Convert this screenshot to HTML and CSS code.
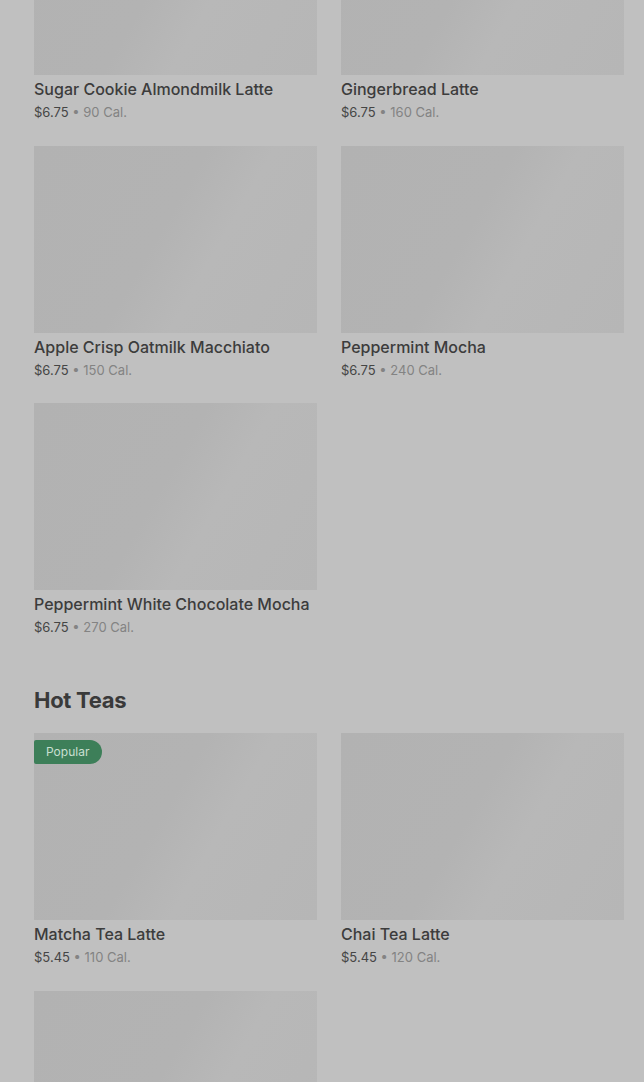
FILE: index.html
```html
<!DOCTYPE html>
<html lang="en">

<head>
    <meta charset="UTF-8">
    <meta name="viewport" content="width=device-width, initial-scale=1.0">
    <title>Menu</title>
    <link rel="stylesheet" href="styles.css">
</head>

<body>
    <main class="menu">
        <section class="category first">
            <div class="grid">
                <div class="card">
                    <div class="thumb"></div>
                    <h3>Sugar Cookie Almondmilk Latte</h3>
                    <p class="meta">$6.75 <span class="cal">• 90 Cal.</span></p>
                </div>
                <div class="card">
                    <div class="thumb"></div>
                    <h3>Gingerbread Latte</h3>
                    <p class="meta">$6.75 <span class="cal">• 160 Cal.</span></p>
                </div>
                <div class="card">
                    <div class="thumb"></div>
                    <h3>Apple Crisp Oatmilk Macchiato</h3>
                    <p class="meta">$6.75 <span class="cal">• 150 Cal.</span></p>
                </div>
                <div class="card">
                    <div class="thumb"></div>
                    <h3>Peppermint Mocha</h3>
                    <p class="meta">$6.75 <span class="cal">• 240 Cal.</span></p>
                </div>
                <div class="card">
                    <div class="thumb"></div>
                    <h3>Peppermint White Chocolate Mocha</h3>
                    <p class="meta">$6.75 <span class="cal">• 270 Cal.</span></p>
                </div>
            </div>
        </section>

        <section class="category">
            <h2>Hot Teas</h2>
            <div class="grid">
                <div class="card">
                    <div class="thumb">
                        <span class="badge">Popular</span>
                    </div>
                    <h3>Matcha Tea Latte</h3>
                    <p class="meta">$5.45 <span class="cal">• 110 Cal.</span></p>
                </div>
                <div class="card">
                    <div class="thumb"></div>
                    <h3>Chai Tea Latte</h3>
                    <p class="meta">$5.45 <span class="cal">• 120 Cal.</span></p>
                </div>
                <div class="card">
                    <!-- next item, still loading -->
                    <div class="thumb"></div>
                </div>
            </div>
        </section>
    </main>
</body>

</html>
```

FILE: styles.css
```css
* {
    box-sizing: border-box;
    margin: 0;
}

body {
    background-color: #c0c0c0;
    font-family: Inter, Roboto, "Liberation Sans", sans-serif;
    color: #3b3b3b;
    overflow: hidden;
}

.menu {
    padding: 0 20px 0 34px;
}

.category.first {
    margin-top: -112px;
}

.category {
    margin-bottom: 50px;
}

h2 {
    font-size: 22px;
    line-height: 28px;
    font-weight: 700;
    color: #3a3a3a;
    letter-spacing: -0.3px;
    margin-bottom: 19px;
}

.grid {
    display: grid;
    grid-template-columns: 283px 283px;
    column-gap: 24px;
    row-gap: 24.5px;
}

.thumb {
    position: relative;
    height: 187px;
    background: linear-gradient(120deg, #b2b2b2 0%, #b3b3b3 45%, #b8b8b8 62%, #b6b6b6 100%);
}

.badge {
    position: absolute;
    top: 7px;
    left: 0;
    height: 24px;
    padding: 0 13px 0 12px;
    background-color: #3d7f59;
    color: #c9dfd1;
    font-size: 12px;
    line-height: 24px;
    border-radius: 2px 12px 12px 2px;
}

.card h3 {
    margin-top: 4px;
    font-size: 16px;
    line-height: 20px;
    font-weight: 500;
    color: #3c3c3c;
}

.meta {
    margin-top: 4px;
    font-size: 13px;
    line-height: 18px;
    color: #454545;
}

.cal {
    color: #838383;
}
```
